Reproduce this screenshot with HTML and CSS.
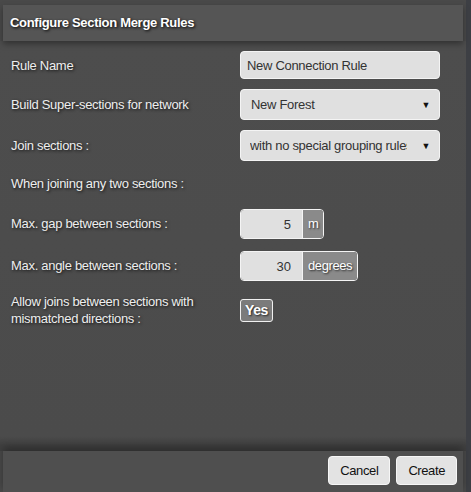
FILE: index.html
```html
<!DOCTYPE html>
<html lang="en">
<head>
    <meta charset="UTF-8">
    <title>Configure Section Merge Rules</title>
    <link rel="stylesheet" href="styles.css">
</head>
<body>

<div class="dialog">
    <header class="dialog-title">Configure Section Merge Rules</header>

    <!-- Pola formularza -->
    <form class="dialog-body">
        <label class="row-label" for="rule-name">Rule Name</label>
        <input class="text-field" type="text" id="rule-name" value="New Connection Rule">

        <label class="row-label" for="network">Build Super-sections for network</label>
        <div class="select-box" id="network"><span>New Forest</span><i class="arrow">&#9660;</i></div>

        <label class="row-label" for="join">Join sections :</label>
        <div class="select-box" id="join"><span>with no special grouping rules</span><i class="arrow">&#9660;</i></div>

        <div class="row-label full">When joining any two sections :</div>

        <label class="row-label" for="gap">Max. gap between sections :</label>
        <div class="unit-field">
            <input type="text" id="gap" value="5">
            <span class="unit">m</span>
        </div>

        <label class="row-label" for="angle">Max. angle between sections :</label>
        <div class="unit-field">
            <input type="text" id="angle" value="30">
            <span class="unit">degrees</span>
        </div>

        <div class="row-label two-line">Allow joins between sections with mismatched directions :</div>
        <div><button type="button" class="toggle">Yes</button></div>
    </form>

    <footer class="dialog-footer">
        <button type="button" class="btn">Cancel</button>
        <button type="button" class="btn">Create</button>
    </footer>
</div>

</body>
</html>
```

FILE: styles.css
```css
* {
    margin: 0;
    padding: 0;
    box-sizing: border-box;
}

body {
    background-color: #3d3f44;
    font-family: "Liberation Sans", Arial, sans-serif;
    font-size: 13px;
    width: 471px;
    height: 492px;
    overflow: hidden;
}

/* Okno dialogowe */
.dialog {
    width: 466px;
    height: 492px;
    background-color: #494949;
    padding-top: 5px;
    display: flex;
    flex-direction: column;
}

.dialog-title {
    margin: 0 3px;
    height: 36px;
    background-color: #555;
    color: #fff;
    font-weight: bold;
    letter-spacing: -0.3px;
    padding-left: 7px;
    line-height: 36px;
    text-shadow: 1px 1px 3px #000;
    box-shadow: 0 3px 6px rgba(0, 0, 0, 0.35);
    position: relative;
}

.dialog-body {
    flex: 1;
    display: grid;
    grid-template-columns: 229px 200px;
    grid-auto-rows: min-content;
    column-gap: 0;
    row-gap: 10px;
    padding: 10px 0 0 11px;
    align-items: center;
    background: linear-gradient(to bottom, #4d4d4d 0, #4b4b4b 395px, #404040 405px);
}

.row-label {
    color: #eee;
    letter-spacing: -0.3px;
    text-shadow: 1px 1px 3px #111;
}

.row-label.full {
    grid-column: 1 / 3;
    height: 26px;
    line-height: 26px;
}

.row-label.two-line {
    width: 205px;
    line-height: 17px;
    margin-top: 2px;
}

.text-field,
.select-box {
    width: 200px;
    height: 28px;
    background-color: #e0e0e0;
    border: 1px solid #f4f4f4;
    border-radius: 4px;
    color: #333;
    font-family: inherit;
    font-size: 13px;
    letter-spacing: -0.3px;
    padding-left: 6px;
    outline: none;
}

.select-box {
    height: 31px;
    display: flex;
    align-items: center;
    padding: 0 9px 0 10px;
    overflow: hidden;
    white-space: nowrap;
}

#join {
    padding-left: 9px;
}

.select-box span {
    flex: 1;
    overflow: hidden;
}

.arrow {
    font-style: normal;
    font-size: 9px;
    color: #111;
    margin-left: 14px;
}

/* Pola z jednostka */
.unit-field {
    display: inline-flex;
    justify-self: start;
    height: 30px;
    border: 1px solid #f4f4f4;
    border-radius: 4px;
    overflow: hidden;
    margin-top: 2px;
}

.unit-field input {
    width: 61px;
    border: none;
    background-color: #e0e0e0;
    color: #333;
    font-family: inherit;
    font-size: 13px;
    text-align: right;
    padding-right: 11px;
    outline: none;
}

.unit-field .unit {
    background-color: #8a8a8a;
    border-left: 1px solid #f4f4f4;
    color: #fff;
    letter-spacing: -0.4px;
    text-shadow: 1px 1px 2px #222;
    padding: 0 5px 0 5px;
    line-height: 28px;
}

.toggle {
    margin-top: 2px;
    height: 23px;
    padding: 0 4px;
    background-color: #7b7b7b;
    border: 1px solid #f0f0f0;
    border-radius: 3px;
    color: #fff;
    font-family: inherit;
    font-size: 14px;
    font-weight: bold;
    letter-spacing: -0.4px;
    text-shadow: 1px 1px 2px #222;
}

/* Stopka */
.dialog-footer {
    margin: 0 3px;
    height: 41px;
    background-color: #4f4f4f;
    display: flex;
    justify-content: flex-end;
    align-items: flex-start;
    gap: 6px;
    padding: 5px 6px 0 0;
    box-shadow: 0 -4px 8px rgba(0, 0, 0, 0.3);
}

.btn {
    height: 29px;
    padding: 0 11px;
    background-color: #e3e3e3;
    border: 1px solid #f6f6f6;
    border-radius: 4px;
    color: #111;
    font-family: inherit;
    font-size: 13px;
    letter-spacing: -0.4px;
}
```
